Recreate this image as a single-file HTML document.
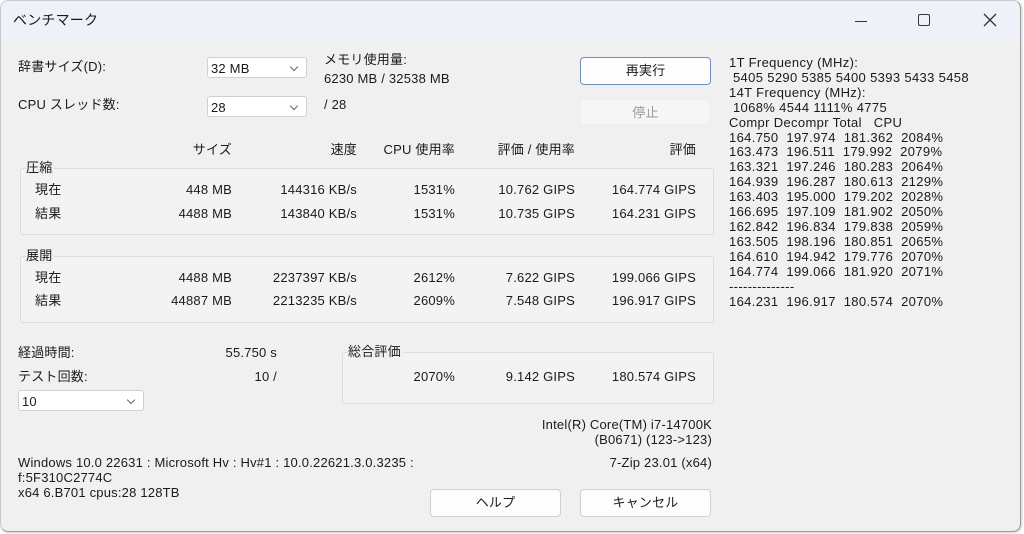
<!DOCTYPE html>
<html><head><meta charset="utf-8"><style>
html{background:#fff}
body{margin:0;width:1024px;height:534px;overflow:hidden;background:#fff;font-family:"Liberation Sans","Noto Sans CJK JP",sans-serif;font-size:13px;color:#1a1a1a;position:relative;letter-spacing:0.2px}
.win{position:absolute;left:0;top:0;width:1019px;height:530px;border:1px solid #9c9c9c;border-top-color:#c8c8c8;border-left-color:#c8c8c8;border-radius:8px;background:#f0f0f0;overflow:hidden;box-shadow:1px 1px 2px rgba(0,0,0,.2)}
.a{position:absolute;white-space:nowrap;line-height:16px}
.r{text-align:right}
.box{position:absolute;border:1px solid #dcdcdc;border-radius:3px;background:#f3f3f3}
.sel{position:absolute;background:#fff;border:1px solid #d0d0d0;border-radius:3px;height:21px;line-height:21px;padding-left:3px;box-sizing:border-box}
.sel:after{content:"";position:absolute;right:9px;top:6px;width:5px;height:5px;border-right:1px solid #666;border-bottom:1px solid #666;transform:rotate(45deg)}
.btn{position:absolute;background:#fdfdfd;border:1px solid #d0d0d0;border-radius:4px;text-align:center;box-sizing:border-box}
</style></head><body>
<div class="win"></div>
<div style="position:absolute;left:1px;top:1px;width:1018px;height:41px;background:#eef2f8;border-radius:7px 7px 0 0"></div>
<div class="a" style="left:13px;top:12px;font-size:14px">ベンチマーク</div>
<div class="a" style="left:855px;width:12px;height:1px;background:#333;top:21px"></div>
<div style="position:absolute;left:918px;top:14px;width:10px;height:10px;border:1.5px solid #333;border-radius:2px"></div>
<svg style="position:absolute;left:983px;top:13px" width="14" height="14"><path d="M1 1L13 13M13 1L1 13" stroke="#333" stroke-width="1.3"/></svg>

<div class="a" style="left:18px;top:59px">辞書サイズ(D):</div>
<div class="sel" style="left:207px;top:57px;width:100px">32 MB</div>
<div class="a" style="left:324px;top:52px">メモリ使用量:</div>
<div class="a" style="left:324px;top:71px">6230 MB / 32538 MB</div>
<div class="a" style="left:18px;top:97px">CPU スレッド数:</div>
<div class="sel" style="left:207px;top:96px;width:100px">28</div>
<div class="a" style="left:324px;top:97px">/ 28</div>
<div class="btn" style="left:580px;top:57px;width:131px;height:28px;line-height:26px;border-color:#6b8fbf">再実行</div>
<div class="btn" style="left:580px;top:99px;width:131px;height:26px;line-height:26px;background:#f6f6f6;border-color:#ececec;color:#9a9a9a">停止</div>

<div class="a r" style="left:150px;width:82px;top:142px">サイズ</div>
<div class="a r" style="left:250px;width:107px;top:142px">速度</div>
<div class="a r" style="left:355px;width:100px;top:142px">CPU 使用率</div>
<div class="a r" style="left:460px;width:115px;top:142px">評価 / 使用率</div>
<div class="a r" style="left:600px;width:96px;top:142px">評価</div>

<div class="box" style="left:20px;top:168px;width:692px;height:65px"></div>
<div class="a" style="left:26px;top:160px;background:#f0f0f0;padding-right:2px">圧縮</div>
<div class="box" style="left:20px;top:256px;width:692px;height:65px"></div>
<div class="a" style="left:26px;top:248px;background:#f0f0f0;padding-right:2px">展開</div>

<div class="a" style="left:35px;top:182px">現在</div>
<div class="a r" style="left:150px;width:82px;top:182px">448 MB</div>
<div class="a r" style="left:250px;width:107px;top:182px">144316 KB/s</div>
<div class="a r" style="left:355px;width:100px;top:182px">1531%</div>
<div class="a r" style="left:460px;width:115px;top:182px">10.762 GIPS</div>
<div class="a r" style="left:580px;width:116px;top:182px">164.774 GIPS</div>
<div class="a" style="left:35px;top:206px">結果</div>
<div class="a r" style="left:150px;width:82px;top:206px">4488 MB</div>
<div class="a r" style="left:250px;width:107px;top:206px">143840 KB/s</div>
<div class="a r" style="left:355px;width:100px;top:206px">1531%</div>
<div class="a r" style="left:460px;width:115px;top:206px">10.735 GIPS</div>
<div class="a r" style="left:580px;width:116px;top:206px">164.231 GIPS</div>

<div class="a" style="left:35px;top:270px">現在</div>
<div class="a r" style="left:150px;width:82px;top:270px">4488 MB</div>
<div class="a r" style="left:250px;width:107px;top:270px">2237397 KB/s</div>
<div class="a r" style="left:355px;width:100px;top:270px">2612%</div>
<div class="a r" style="left:460px;width:115px;top:270px">7.622 GIPS</div>
<div class="a r" style="left:580px;width:116px;top:270px">199.066 GIPS</div>
<div class="a" style="left:35px;top:293px">結果</div>
<div class="a r" style="left:150px;width:82px;top:293px">44887 MB</div>
<div class="a r" style="left:250px;width:107px;top:293px">2213235 KB/s</div>
<div class="a r" style="left:355px;width:100px;top:293px">2609%</div>
<div class="a r" style="left:460px;width:115px;top:293px">7.548 GIPS</div>
<div class="a r" style="left:580px;width:116px;top:293px">196.917 GIPS</div>

<div class="a" style="left:18px;top:345px">経過時間:</div>
<div class="a r" style="left:180px;width:97px;top:345px">55.750 s</div>
<div class="a" style="left:18px;top:369px">テスト回数:</div>
<div class="a r" style="left:180px;width:97px;top:369px">10 /</div>
<div class="sel" style="left:18px;top:390px;width:126px">10</div>
<div class="box" style="left:342px;top:352px;width:370px;height:50px"></div>
<div class="a" style="left:348px;top:344px;background:#f0f0f0;padding-right:2px">総合評価</div>
<div class="a r" style="left:355px;width:100px;top:369px">2070%</div>
<div class="a r" style="left:460px;width:115px;top:369px">9.142 GIPS</div>
<div class="a r" style="left:580px;width:116px;top:369px">180.574 GIPS</div>

<div class="a r" style="left:450px;width:262px;top:417px">Intel(R) Core(TM) i7-14700K</div>
<div class="a r" style="left:450px;width:262px;top:432px">(B0671) (123-&gt;123)</div>
<div class="a r" style="left:450px;width:262px;top:455px">7-Zip 23.01 (x64)</div>
<div class="a" style="left:18px;top:455px">Windows 10.0 22631 : Microsoft Hv : Hv#1 : 10.0.22621.3.0.3235 :</div>
<div class="a" style="left:18px;top:470px">f:5F310C2774C</div>
<div class="a" style="left:18px;top:485px">x64 6.B701 cpus:28 128TB</div>
<div class="btn" style="left:430px;top:489px;width:131px;height:28px;line-height:26px">ヘルプ</div>
<div class="btn" style="left:580px;top:489px;width:131px;height:28px;line-height:26px">キャンセル</div>

<div class="a" style="left:729px;top:56px;line-height:14.9px;white-space:pre;letter-spacing:0.35px">1T Frequency (MHz):
 5405 5290 5385 5400 5393 5433 5458
14T Frequency (MHz):
 1068% 4544 1111% 4775
Compr Decompr Total   CPU
164.750  197.974  181.362  2084%
163.473  196.511  179.992  2079%
163.321  197.246  180.283  2064%
164.939  196.287  180.613  2129%
163.403  195.000  179.202  2028%
166.695  197.109  181.902  2050%
162.842  196.834  179.838  2059%
163.505  198.196  180.851  2065%
164.610  194.942  179.776  2070%
164.774  199.066  181.920  2071%
--------------
164.231  196.917  180.574  2070%</div>
</body></html>
